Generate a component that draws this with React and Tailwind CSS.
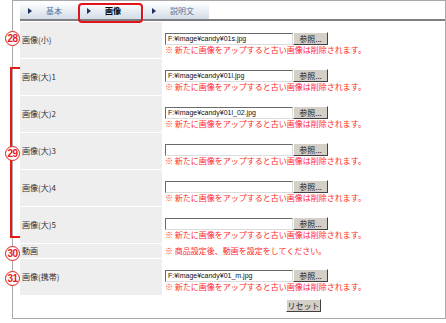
import React from 'react';

const WARN = '※ 新たに画像をアップすると古い画像は削除されます。';

const rows = [
    { label: '画像(小)', value: 'F:¥image¥candy¥01s.jpg' },
    { label: '画像(大)1', value: 'F:¥image¥candy¥01l.jpg' },
    { label: '画像(大)2', value: 'F:¥image¥candy¥01l_02.jpg' },
    { label: '画像(大)3', value: '' },
    { label: '画像(大)4', value: '' },
    { label: '画像(大)5', value: '' },
];

const Triangle = () => (
    <svg width="4" height="6" viewBox="0 0 4 6" className="shrink-0">
        <polygon points="0,0 4,3 0,6" fill="#1f3060" />
    </svg>
);

const Tab = ({ label, active, width }) => (
    <div
        className={`relative h-[16px] flex items-center pl-[8px] gap-[14px] bg-linear-to-b from-[#fdfeff] to-[#d3dce7] border-r border-white ${width}`}
    >
        <Triangle />
        <span className={`text-[8px] leading-none ${active ? 'font-bold text-black' : 'text-[#5b7096]'}`}>{label}</span>
        {active && (
            <div className="absolute left-[-1px] right-[0px] top-[0px] h-[20px] border-2 border-[#e0151b] rounded-[4px]" />
        )}
    </div>
);

const Browse = ({ label }) => (
    <button className="w-[35px] h-[13px] bg-[#d4d0c8] border border-t-white border-l-white border-b-[#404040] border-r-[#404040] text-[8px] leading-none text-[#222] flex items-center justify-center">
        {label}
    </button>
);

const FileField = ({ value }) => (
    <div className="flex items-center">
        <div className="w-[128px] h-[12px] bg-white border border-t-[#6a6a6a] border-l-[#6a6a6a] border-b-[#dcdcdc] border-r-[#dcdcdc] text-[7px] leading-[10px] pl-[2px] text-[#111] font-['Liberation_Sans',sans-serif] overflow-hidden whitespace-nowrap">
            {value}
        </div>
        <Browse label="参照..." />
    </div>
);

const Warn = ({ children }) => (
    <p className="text-[8px] leading-[10px] text-[#ff2a2a] whitespace-nowrap">{children}</p>
);

const Row = ({ label, children, height = 'h-[36px]', top = 'pt-[10px]' }) => (
    <div className={`flex ${height}`}>
        <div className="w-[142px] bg-[#eeeeee] flex items-center pl-[2px] text-[8px] text-[#333]">{label}</div>
        <div className={`flex-1 pl-[3px] ${top}`}>{children}</div>
    </div>
);

const Circle = ({ n, top }) => (
    <div
        className={`absolute left-[5px] ${top} w-[15px] h-[15px] rounded-full border-[1.5px] border-[#e41b1b] bg-white flex items-center justify-center text-[#e41b1b] text-[10px] font-bold font-['Liberation_Sans_Narrow','Liberation_Sans',sans-serif] tracking-[-0.6px] leading-none`}
    >
        {n}
    </div>
);

export default function App() {
    return (
        <div className="relative w-[446px] h-[323px] bg-white font-['Noto_Sans_CJK_JP',sans-serif]">
            <div className="ml-[12px] w-[434px] h-[319px] border border-[#a9a9a9] pl-[7px] pt-[2px]">
                {/* tabs */}
                <div className="flex">
                    <Tab label="基本" width="w-[59px]" />
                    <Tab label="画像" active width="w-[65px]" />
                    <Tab label="説明文" width="w-[66px]" />
                </div>
                <div className="h-[2px] bg-[#7f7f7f]" />

                <div className="mt-[1px] flex flex-col gap-[1px]">
                    {rows.map((r) => (
                        <Row key={r.label} label={r.label}>
                            <FileField value={r.value} />
                            <Warn>{WARN}</Warn>
                        </Row>
                    ))}
                    <Row label="動画" height="h-[14px]" top="pt-[2px]">
                        <Warn>※ 商品設定後、動画を設定をしてください。</Warn>
                    </Row>
                    <Row label="画像(携帯)">
                        <FileField value="F:¥image¥candy¥01_m.jpg" />
                        <Warn>{WARN}</Warn>
                    </Row>
                </div>

                <div className="flex mt-[4px]">
                    <div className="w-[142px]" />
                    <div className="flex-1 flex justify-center">
                        <Browse label="リセット" />
                    </div>
                </div>
            </div>

            {/* annotations */}
            <div className="absolute left-[10px] top-[67px] w-[10px] h-[171px] border-l-2 border-t-2 border-b-2 border-[#e41b1b]" />
            <Circle n="28" top="top-[31px]" />
            <Circle n="29" top="top-[146px]" />
            <Circle n="30" top="top-[246px]" />
            <Circle n="31" top="top-[271px]" />
        </div>
    );
}
